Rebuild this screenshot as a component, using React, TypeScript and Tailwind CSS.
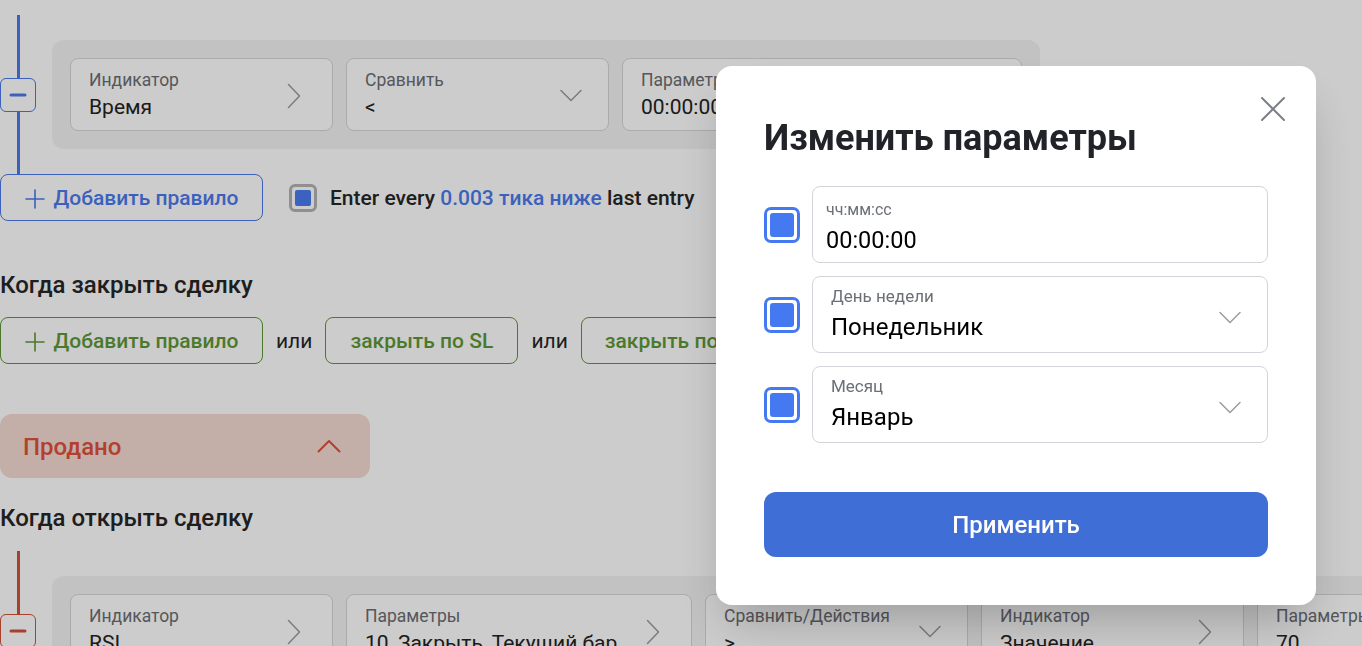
import React from 'react';
import { Minus } from 'lucide-react';

const ChevRight: React.FC<{ className?: string }> = ({ className = '' }) => (
  <svg width="14" height="26" viewBox="0 0 14 26" fill="none" className={className}>
    <polyline points="1.5,1.5 12.5,13 1.5,24.5" stroke="currentColor" strokeWidth="1.5" strokeLinecap="round" strokeLinejoin="round" />
  </svg>
);

const ChevDown: React.FC<{ className?: string }> = ({ className = '' }) => (
  <svg width="22" height="13" viewBox="0 0 22 13" fill="none" className={className}>
    <polyline points="1,1.5 11,11.5 21,1.5" stroke="currentColor" strokeWidth="1.5" strokeLinecap="round" strokeLinejoin="round" />
  </svg>
);

const PlusIcon: React.FC = () => (
  <svg width="20" height="20" viewBox="0 0 20 20" fill="none">
    <path d="M10 1v18M1 10h18" stroke="currentColor" strokeWidth="1.6" strokeLinecap="round" />
  </svg>
);

type FieldProps = {
  label: string;
  value: string;
  icon?: 'right' | 'down';
  width?: string;
};

const Field: React.FC<FieldProps> = ({ label, value, icon = 'right', width = 'w-[263px]' }) => (
  <div className={`relative ${width} h-[73px] shrink-0 rounded-lg border border-[#d6d6d8] bg-white pl-[18px] pt-[11px]`}>
    <div className="text-[17.5px] leading-5 text-[#6b6d72]">{label}</div>
    <div className="mt-[3px] text-[21px] leading-7 text-[#222]">{value}</div>
    {icon === 'right' ? (
      <ChevRight className="absolute right-[31px] top-[24px] text-[#9a9ca2]" />
    ) : (
      <ChevDown className="absolute right-[26px] top-[30px] text-[#9a9ca2]" />
    )}
  </div>
);

const Rail: React.FC<{ color: string; children: React.ReactNode; open?: boolean }> = ({ color, children, open }) => (
  <div className="flex">
    <div className="flex w-9 shrink-0 flex-col items-center">
      <div className={`h-[63px] w-[3px] ${color === 'blue' ? 'bg-[#4a7aeb]' : 'bg-[#d2513a]'}`} />
      <div
        className={`flex h-[34px] w-9 items-center justify-center rounded-md border bg-white ${
          color === 'blue' ? 'border-[#4a7aeb] text-[#4a7aeb]' : 'border-[#d2513a] text-[#d2513a]'
        }`}
      >
        <Minus className="h-6 w-6" strokeWidth={3} />
      </div>
      {!open && <div className={`w-[3px] flex-1 ${color === 'blue' ? 'bg-[#4a7aeb]' : 'bg-[#d2513a]'}`} />}
    </div>
    <div className="ml-4 mt-[25px] mb-[25px] flex gap-[13px] rounded-xl bg-[#f3f3f4] p-[18px]">{children}</div>
  </div>
);

const ModalCheck: React.FC = () => (
  <div className="flex h-9 w-9 shrink-0 items-center justify-center rounded-[7px] border-[3px] border-[#4479f2] bg-white">
    <div className="h-[24px] w-[24px] rounded-[3px] bg-[#4479f2]" />
  </div>
);

const App: React.FC = () => {
  return (
    <div className="relative h-[646px] w-[1362px] overflow-hidden bg-white" style={{ fontFamily: 'Roboto, "Noto Sans", sans-serif' }}>
      <div className="w-[1500px] pt-[15px]">
        <Rail color="blue">
          <Field label="Индикатор" value="Время" />
          <Field label="Сравнить" value="<" icon="down" />
          <Field label="Параметры" value="00:00:00" width="w-[400px]" icon="down" />
        </Rail>

        <div className="flex items-center">
          <button className="flex h-[47px] w-[263px] items-center justify-center gap-[9px] rounded-lg border border-[#4a7aeb] pt-[2px] text-[21px] font-medium text-[#4a7aeb]">
            <PlusIcon />
            Добавить правило
          </button>
          <div className="ml-[26px] flex h-7 w-7 items-center justify-center rounded-[6px] border-[3px] border-[#b3b3b5] bg-white">
            <div className="h-4 w-4 rounded-[2px] bg-[#4a7bf0]" />
          </div>
          <div className="ml-[13px] pt-[3px] text-[21px] font-medium text-[#262626]">
            Enter every <span className="text-[#4a7aeb]">0.003 тика ниже</span> last entry
          </div>
        </div>

        <div className="mt-[50px] text-[24px] font-medium leading-7 text-[#262626]">Когда закрыть сделку</div>

        <div className="mt-[18px] flex items-center gap-[13px] text-[21px]">
          <button className="flex h-[47px] w-[263px] items-center justify-center gap-[9px] rounded-lg border border-[#5e9837] pt-[2px] font-medium text-[#5e9837]">
            <PlusIcon />
            Добавить правило
          </button>
          <span className="pt-[2px] text-[#262626]">или</span>
          <button className="h-[47px] w-[193px] rounded-lg border border-[#5e9837] pt-[2px] font-medium text-[#5e9837]">закрыть по SL</button>
          <span className="pt-[2px] text-[#262626]">или</span>
          <button className="h-[47px] w-[193px] rounded-lg border border-[#5e9837] pt-[2px] font-medium text-[#5e9837]">закрыть по TP</button>
        </div>

        <div className="mt-[50px] flex h-16 w-[370px] items-center justify-between rounded-xl bg-[#f5dbd3] pl-[23px] pr-[29px]">
          <span className="pt-[2px] text-[24px] font-medium text-[#df503a]">Продано</span>
          <svg width="24" height="14" viewBox="0 0 24 14" fill="none" className="text-[#df503a]">
            <polyline points="1.5,12.5 12,2 22.5,12.5" stroke="currentColor" strokeWidth="2" strokeLinecap="round" strokeLinejoin="round" />
          </svg>
        </div>

        <div className="mt-[26px] text-[24px] font-medium leading-7 text-[#262626]">Когда открыть сделку</div>

        <div className="mt-[19px]">
          <Rail color="red" open>
            <Field label="Индикатор" value="RSI" />
            <Field label="Параметры" value="10, Закрыть, Текущий бар" width="w-[346px]" />
            <Field label="Сравнить/Действия" value=">" icon="down" />
            <Field label="Индикатор" value="Значение" />
            <Field label="Параметры" value="70" />
          </Rail>
        </div>
      </div>

      <div className="fixed inset-0 bg-black/20" />

      <div className="fixed left-[716px] top-[66px] w-[600px] rounded-2xl bg-white px-12 pt-[52px] pb-12 shadow-2xl">
        <button className="absolute right-[31px] top-[31px] text-[#7d8088]">
          <svg width="24" height="24" viewBox="0 0 24 24" fill="none">
            <path d="M1 1l22 22M23 1L1 23" stroke="currentColor" strokeWidth="2" strokeLinecap="round" />
          </svg>
        </button>
        <h2 className="text-[36px] font-bold leading-10 text-[#212328]">Изменить параметры</h2>

        <div className="mt-7 flex flex-col gap-[13px]">
          <div className="flex items-center gap-3">
            <ModalCheck />
            <div className="h-[77px] flex-1 rounded-lg border border-[#d4d5da] pl-[13px] pt-[13px]">
              <div className="text-[16px] leading-5 text-[#6b6f76]">чч:мм:сс</div>
              <div className="mt-[4px] text-[23.5px] leading-8 text-black">00:00:00</div>
            </div>
          </div>
          {[
            ['День недели', 'Понедельник'],
            ['Месяц', 'Январь'],
          ].map(([label, value]) => (
            <div key={label} className="flex items-center gap-3">
              <ModalCheck />
              <div className="relative h-[77px] flex-1 rounded-lg border border-[#d4d5da] pl-[18px] pt-[9px]">
                <div className="text-[17px] leading-5 text-[#6b6f76]">{label}</div>
                <div className="mt-[5px] text-[24px] leading-8 text-black">{value}</div>
                <ChevDown className="absolute right-[26px] top-[34px] text-[#9a9ca2]" />
              </div>
            </div>
          ))}
        </div>

        <button className="mt-[49px] h-[65px] w-full rounded-xl bg-[#3f6fd6] text-[24px] font-medium text-white">
          Применить
        </button>
      </div>
    </div>
  );
};

export default App;
